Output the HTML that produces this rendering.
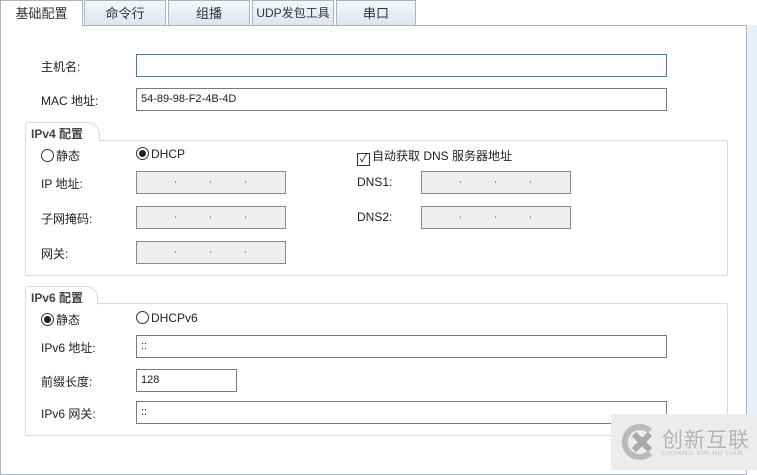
<!DOCTYPE html><html><head><meta charset="utf-8"><style>
*{margin:0;padding:0;box-sizing:border-box}
body{width:757px;height:470px;background:#fff;position:relative;overflow:hidden;font-family:"Liberation Sans","Noto Sans CJK SC",sans-serif;font-size:12px;color:#222}
.a{position:absolute;white-space:nowrap}
.tab{position:absolute;top:0;height:25px;border:1px solid #a9b3c2;border-bottom:none;background:linear-gradient(#f4f6fa,#dfe5ee);text-align:center;line-height:25px;font-size:13px;color:#333}
.in{position:absolute;height:23px;border:1px solid #7a7a7a;background:#fff;padding-left:4px;line-height:21px;font-size:11px}
.ip{position:absolute;height:23px;width:150px;border:1px solid #8a8a8a;background:#efefef}
.ip i{position:absolute;top:9px;width:1px;height:2px;background:#999}
.grp{position:absolute;left:25px;width:703px;border:1px solid #dadada;border-radius:2px}
.gt{position:absolute;left:25px;height:19px;border:1px solid #dadada;border-bottom:none;border-radius:3px 12px 0 0;background:#fff;font-size:12px;font-weight:bold;color:#444;padding:2px 0 0 5px}
.r{display:inline-block;width:13px;height:13px;border:1px solid #333;border-radius:50%;vertical-align:-2px;margin-right:2px;position:relative}
.r.on:after{content:"";position:absolute;left:2px;top:2px;width:7px;height:7px;border-radius:50%;background:#222}
</style></head><body>
<div class="a" style="left:746px;top:25px;width:11px;height:445px;background:#eaf0f8"></div>
<div class="a" style="left:0;top:25px;width:747px;height:450px;border:1px solid #a9b3c2;border-top:1px solid #a9b3c2"></div>
<div class="tab" style="left:0;width:83px;background:#fff;height:27px;border-bottom:none">基础配置</div>
<div class="tab" style="left:84px;width:82px">命令行</div>
<div class="tab" style="left:168px;width:82px">组播</div>
<div class="tab" style="left:252px;width:82px;font-size:12px">UDP发包工具</div>
<div class="tab" style="left:336px;width:80px">串口</div>

<div class="a" style="left:41px;top:58px">主机名:</div>
<div class="in" style="left:136px;top:54px;width:531px;border-color:#3c7fb1"></div>
<div class="a" style="left:41px;top:92px">MAC 地址:</div>
<div class="in" style="left:136px;top:88px;width:531px">54-89-98-F2-4B-4D</div>

<div class="grp" style="top:140px;height:136px"></div>
<div class="gt" style="top:122px;width:75px">IPv4 配置</div>
<div class="a" style="left:41px;top:147px"><span class="r"></span>静态</div>
<div class="a" style="left:136px;top:147px"><span class="r on"></span>DHCP</div>
<div class="a" style="left:357px;top:147px"><span style="display:inline-block;width:13px;height:13px;border:1px solid #333;vertical-align:-2px;margin-right:2px;font-size:11px;line-height:11px;text-align:center">✓</span>自动获取 DNS 服务器地址</div>
<div class="a" style="left:41px;top:175px">IP 地址:</div>
<div class="a" style="left:41px;top:210px">子网掩码:</div>
<div class="a" style="left:41px;top:245px">网关:</div>
<div class="a" style="left:357px;top:175px">DNS1:</div>
<div class="a" style="left:357px;top:210px">DNS2:</div>
<div class="ip" style="left:136px;top:171px"><i style="left:38px"></i><i style="left:73px"></i><i style="left:108px"></i></div>
<div class="ip" style="left:136px;top:206px"><i style="left:38px"></i><i style="left:73px"></i><i style="left:108px"></i></div>
<div class="ip" style="left:136px;top:241px"><i style="left:38px"></i><i style="left:73px"></i><i style="left:108px"></i></div>
<div class="ip" style="left:421px;top:171px"><i style="left:38px"></i><i style="left:73px"></i><i style="left:108px"></i></div>
<div class="ip" style="left:421px;top:206px"><i style="left:38px"></i><i style="left:73px"></i><i style="left:108px"></i></div>

<div class="grp" style="top:303px;height:133px"></div>
<div class="gt" style="top:286px;width:73px">IPv6 配置</div>
<div class="a" style="left:41px;top:311px"><span class="r on"></span>静态</div>
<div class="a" style="left:136px;top:311px"><span class="r"></span>DHCPv6</div>
<div class="a" style="left:41px;top:339px">IPv6 地址:</div>
<div class="in" style="left:136px;top:335px;width:531px">::</div>
<div class="a" style="left:41px;top:373px">前缀长度:</div>
<div class="in" style="left:136px;top:369px;width:101px">128</div>
<div class="a" style="left:41px;top:405px">IPv6 网关:</div>
<div class="in" style="left:136px;top:401px;width:531px">::</div>

<div class="a" style="left:611px;top:414px;width:146px;height:56px;background:#ececec"></div>
<svg class="a" style="left:620px;top:423px" width="40" height="38" viewBox="0 0 40 38"><path d="M30 8 A15 15 0 1 0 30 30" fill="none" stroke="#bbb" stroke-width="6"/><path d="M14 11 L30 27 M30 11 L14 27" stroke="#aaa" stroke-width="6"/></svg>
<div class="a" style="left:662px;top:424px;font-size:21px;color:#b5b5b5;letter-spacing:1px">创新互联</div>
<div class="a" style="left:662px;top:451px;font-size:6px;color:#bbb;letter-spacing:1px">CHUANG XIN HU LIAN</div>
</body></html>
